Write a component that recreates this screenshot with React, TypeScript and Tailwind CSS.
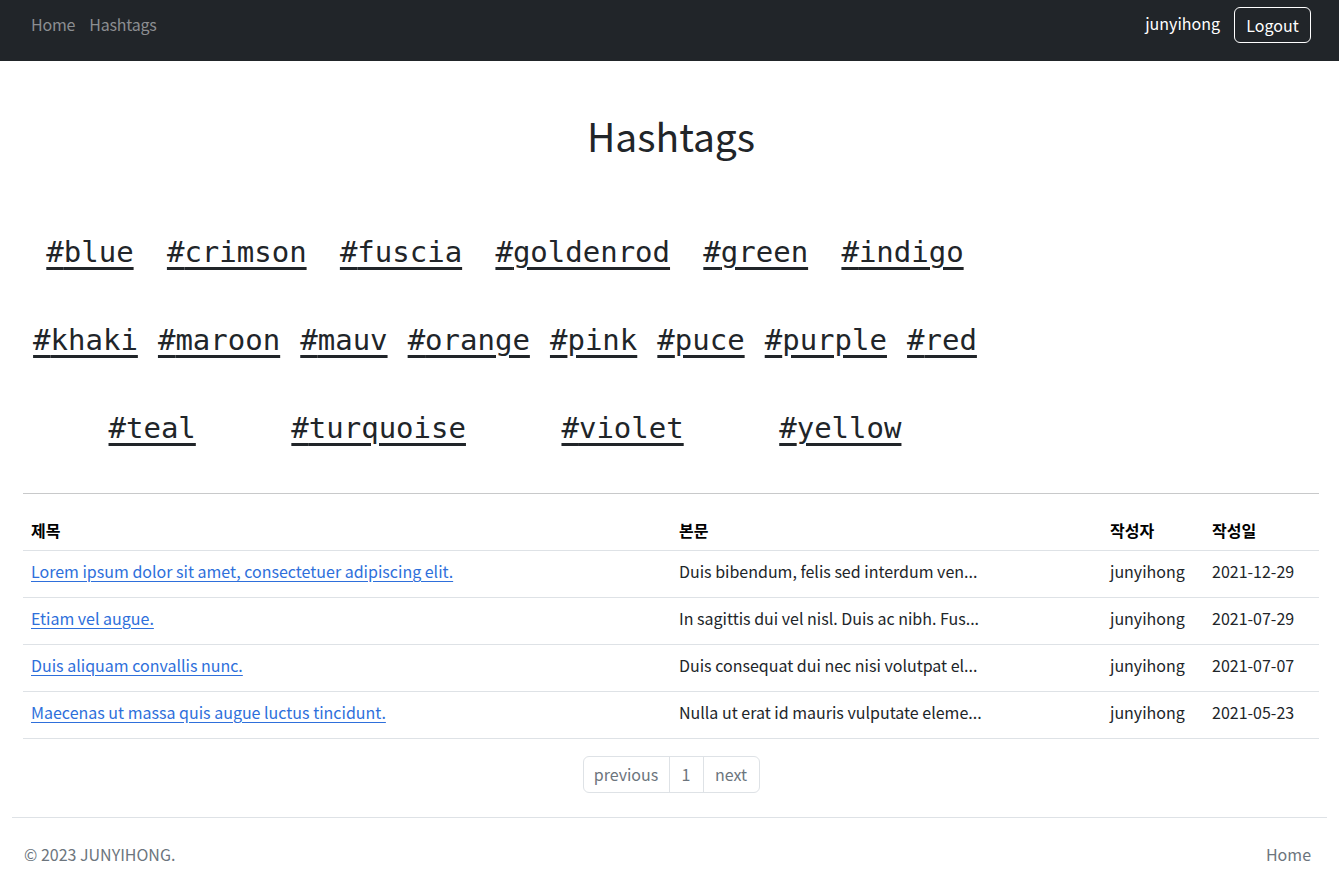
import React from "react";

const rows: string[][] = [
  ["blue", "crimson", "fuscia", "goldenrod", "green", "indigo"],
  ["khaki", "maroon", "mauv", "orange", "pink", "puce", "purple", "red"],
  ["teal", "turquoise", "violet", "yellow"],
];

const articles = [
  ["Lorem ipsum dolor sit amet, consectetuer adipiscing elit.", "Duis bibendum, felis sed interdum ven...", "junyihong", "2021-12-29"],
  ["Etiam vel augue.", "In sagittis dui vel nisl. Duis ac nibh. Fus...", "junyihong", "2021-07-29"],
  ["Duis aliquam convallis nunc.", "Duis consequat dui nec nisi volutpat el...", "junyihong", "2021-07-07"],
  ["Maecenas ut massa quis augue luctus tincidunt.", "Nulla ut erat id mauris vulputate eleme...", "junyihong", "2021-05-23"],
];

export default function App() {
  return (
    <div
      className="min-h-[883px] bg-white text-[#212529]"
      style={{ fontFamily: '"Noto Sans CJK KR", "Noto Sans", sans-serif' }}
    >
      <nav className="h-[61px] bg-[#212529] flex items-center justify-between pl-[31px] pr-[28px]">
        <div className="flex items-center gap-[14px] text-[16px] tracking-[-0.2px] text-[#8c8e91] -mt-[14px]">
          <span>Home</span>
          <span>Hashtags</span>
        </div>
        <div className="flex items-center gap-[14px] -mt-[11px]">
          <span className="text-white text-[16px] -mt-[4px]">junyihong</span>
          <button className="h-[36px] w-[77px] rounded-[6px] border border-white text-white text-[16px] flex items-center justify-center">
            Logout
          </button>
        </div>
      </nav>

      <main className="pl-[23px] pr-[20px]">
        <h1 className="mt-[50px] text-center text-[39px] leading-[48px] font-normal">Hashtags</h1>
        <div className="mt-[50px] w-[984px] -ml-[10px]">
          {rows.map((r, i) => (
            <div key={i} className="h-[88px] flex items-center justify-evenly">
              {r.map((t) => (
                <span
                  key={t}
                  className="text-[29px] underline decoration-[3px] underline-offset-[5px] text-[#212529]"
                  style={{ fontFamily: '"DejaVu Sans Mono", monospace' }}
                >
                  #{t}
                </span>
              ))}
            </div>
          ))}
        </div>
        <hr className="mt-[20px] border-0 border-t border-[#c8c9ca]" />

        <table className="mt-[16px] w-full table-fixed border-collapse text-[16px]">
          <colgroup>
            <col className="w-[648px]" />
            <col className="w-[431px]" />
            <col className="w-[102px]" />
            <col />
          </colgroup>
          <thead>
            <tr className="border-b border-[#dee2e6] h-[40px]">
              <th className="text-left font-semibold text-black px-[8px]">제목</th>
              <th className="text-left font-semibold text-black px-[8px]">본문</th>
              <th className="text-left font-semibold text-black px-[8px]">작성자</th>
              <th className="text-left font-semibold text-black px-[8px]">작성일</th>
            </tr>
          </thead>
          <tbody>
            {articles.map((a) => (
              <tr key={a[0]} className="border-b border-[#dee2e6] h-[47px]">
                <td className="px-[8px] pb-[5px]">
                  <span className="text-[#2e6fdb] underline underline-offset-[3px]">{a[0]}</span>
                </td>
                <td className="px-[8px] pb-[5px]">{a[1]}</td>
                <td className="px-[8px] pb-[5px]">{a[2]}</td>
                <td className="px-[8px] pb-[5px]">{a[3]}</td>
              </tr>
            ))}
          </tbody>
        </table>

        <div className="mt-[17px] flex justify-center">
          <div className="flex h-[37px] border border-[#dee2e6] rounded-[6px] text-[16px] text-[#6c757d]">
            <span className="w-[86px] flex items-center justify-center border-r border-[#dee2e6]">previous</span>
            <span className="w-[34px] flex items-center justify-center border-r border-[#dee2e6]">1</span>
            <span className="w-[55px] flex items-center justify-center">next</span>
          </div>
        </div>
      </main>

      <footer className="mx-[12px] mt-[24px] border-t border-[#dee2e6] h-[66px] flex items-center justify-between px-[12px] text-[16px] text-[#6c757d]">
        <span className="mt-[8px]">© 2023 JUNYIHONG.</span>
        <span className="mt-[8px] mr-[4px]">Home</span>
      </footer>
    </div>
  );
}
